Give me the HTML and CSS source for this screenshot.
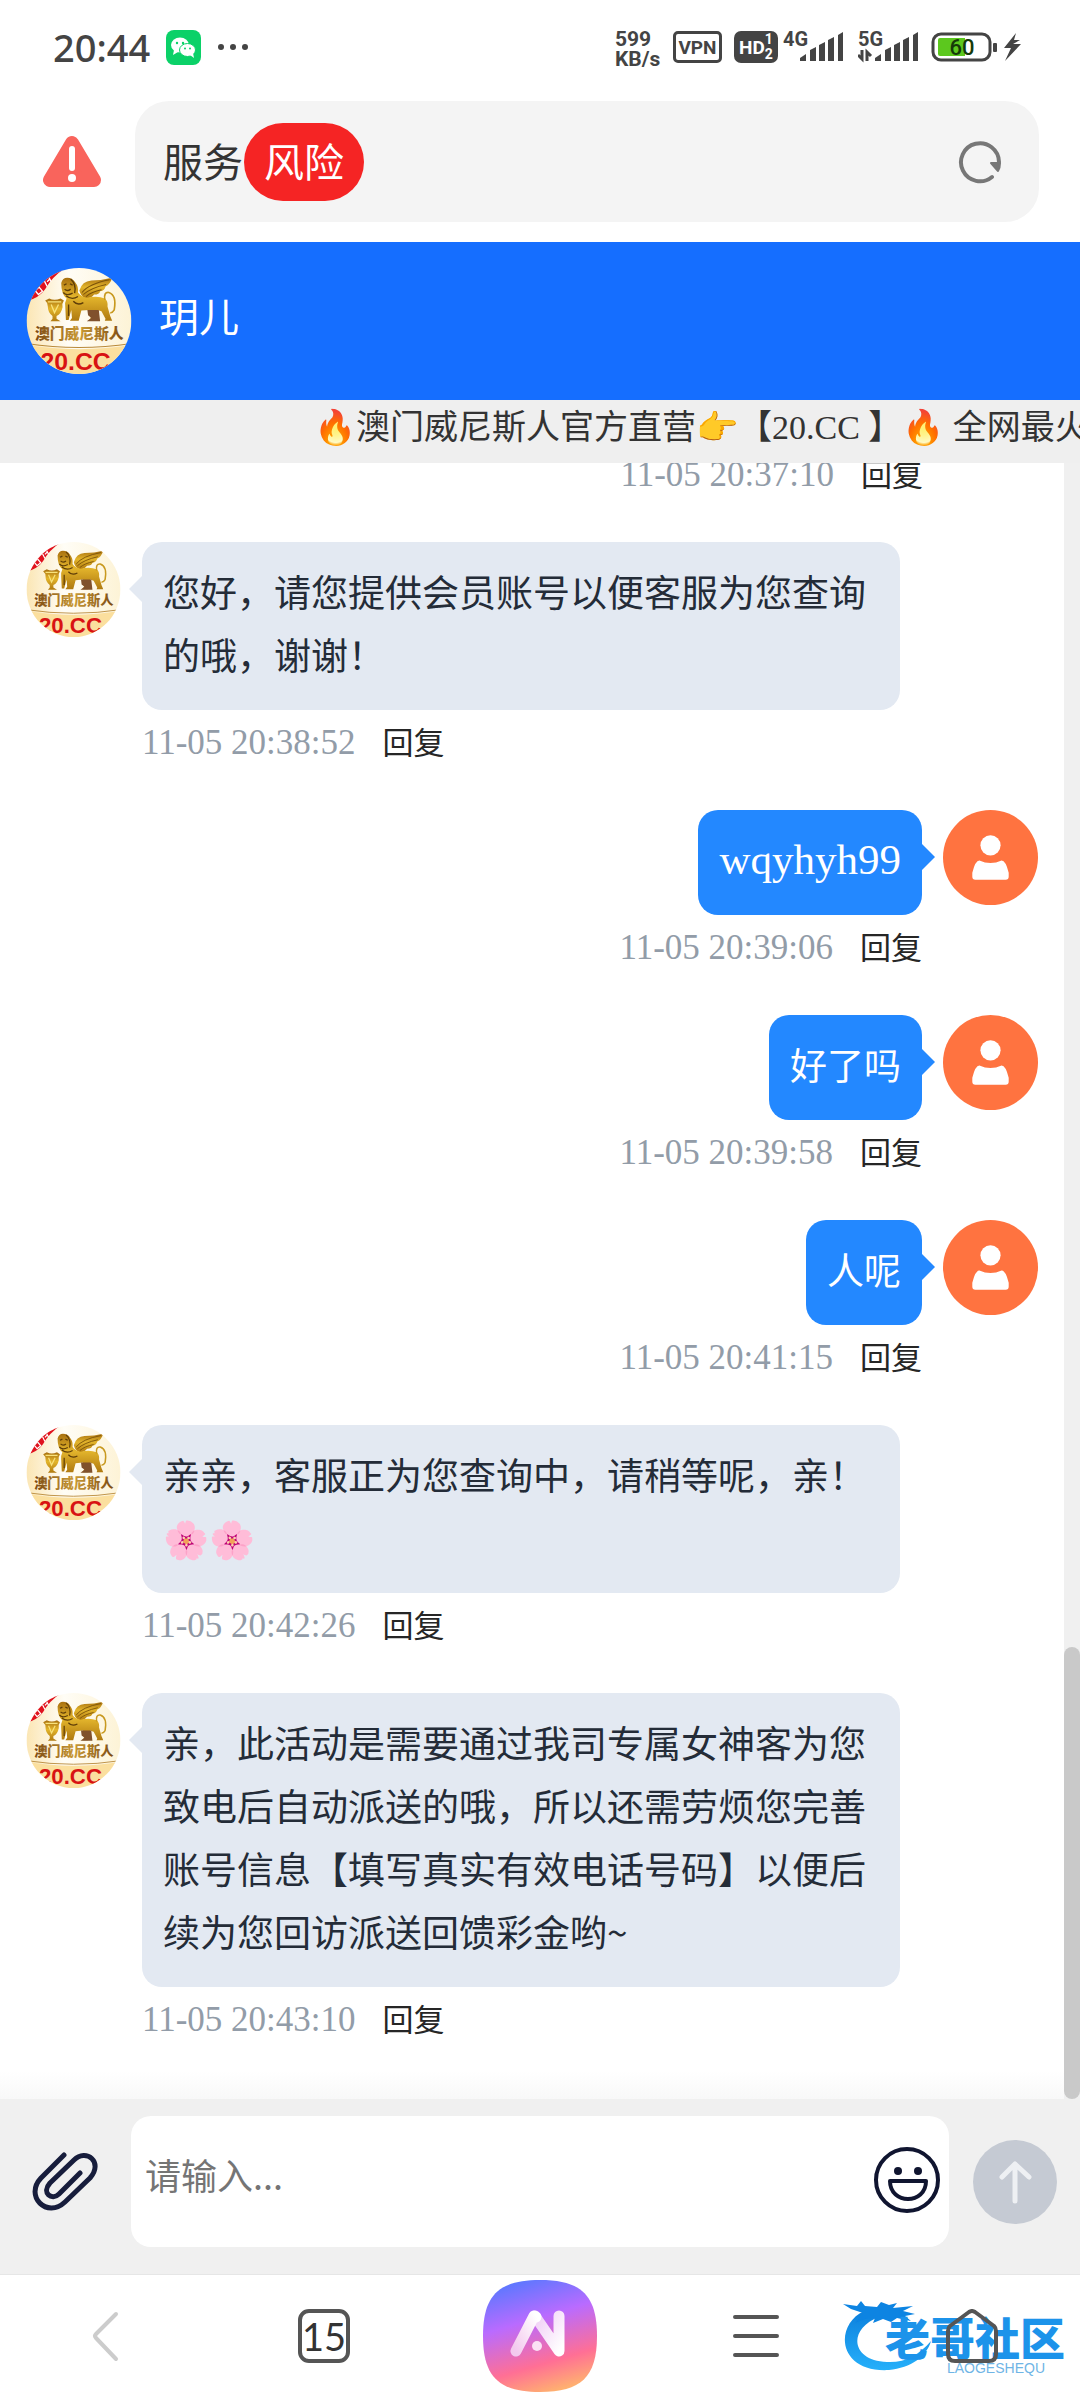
FILE: index.html
```html
<!DOCTYPE html>
<html lang="zh-CN">
<head>
<meta charset="utf-8">
<meta name="viewport" content="width=device-width, initial-scale=1">
<title>服务</title>
<link rel="stylesheet" href="styles.css">
</head>
<body>
<svg class="sprite" aria-hidden="true">
  <defs>
    <linearGradient id="gold" x1="0" y1="0" x2="0" y2="1">
      <stop offset="0" stop-color="#a8700f"/><stop offset=".45" stop-color="#e3b52c"/><stop offset="1" stop-color="#b07a10"/>
    </linearGradient>
    <linearGradient id="cream" x1="0" y1="0" x2="1" y2="0">
      <stop offset="0" stop-color="#fbe6b4"/><stop offset=".4" stop-color="#fffdf6"/><stop offset="1" stop-color="#fdf3d6"/>
    </linearGradient>
    <linearGradient id="letters" x1="0" y1="0" x2="1" y2="0">
      <stop offset="0" stop-color="#7c4a12"/><stop offset=".5" stop-color="#c99a35"/><stop offset="1" stop-color="#7c4a12"/>
    </linearGradient>
    <clipPath id="round"><ellipse cx="177" cy="183" rx="156" ry="158"/></clipPath>
    <symbol id="lion" viewBox="20 25 314 316">
      <g clip-path="url(#round)">
        <rect x="20" y="25" width="314" height="316" fill="url(#cream)"/>
        <path d="M20 254Q177 280 334 254V341H20Z" fill="#fbdf9e"/>
        <path d="M20 250Q177 274 334 250" fill="none" stroke="#b98a3a" stroke-width="3"/>
        <path d="M20 25H136Q96 52 76 88Q58 114 20 124Z" fill="#e0121e"/>
        <path d="M46 92l10 12 12-10-10-12zM74 64l8 16M82 66l8-8M88 54l6 12" fill="none" stroke="#fff" stroke-width="4"/>
        <path d="M178 92Q186 64 214 62Q246 62 276 54Q270 74 256 80Q254 92 240 94Q238 104 222 104Q214 116 196 116Q182 108 178 92Z" fill="url(#gold)"/>
        <path d="M186 98Q206 72 268 60M190 104Q212 84 258 74M198 110Q214 96 244 90" fill="none" stroke="#7b5209" stroke-width="3"/>
        <path d="M124 70Q128 54 142 54Q158 54 166 68Q176 80 174 98Q182 110 200 114Q232 106 254 116Q264 124 262 140L270 168L276 182H254L256 176L244 154L232 150L226 182H206L212 174L208 150L184 152L176 182H150L156 174L154 150L146 180H138L136 140Q134 128 140 116Q124 104 124 70Z" fill="url(#gold)"/>
        <path d="M202 150h34l4 34h-40l14-10-10-8z" fill="#80512c"/>
        <path d="M254 120Q250 96 266 98Q290 106 282 150Q276 160 270 158" fill="none" stroke="#c8991f" stroke-width="5"/>
        <path d="M132 76l8-4M150 72l8 4M134 88q8 8 18 0M130 98q10 12 28 2M152 58q18 16 12 42M138 108q18 14 36 2M160 124q12 14 30 4M146 134v34" fill="none" stroke="#5e3d08" stroke-width="4"/>
        <path d="M76 122L88 116Q104 124 122 116L132 122Q126 130 128 142Q124 162 110 168V176L122 184H92L98 176V168Q84 158 84 140Q84 128 76 122Z" fill="url(#gold)"/>
        <path d="M94 134l10 24 12-24M84 126h40" fill="none" stroke="#f8e27c" stroke-width="4"/>
        <text class="logo-name" x="178" y="236" text-anchor="middle" fill="url(#letters)">澳门威尼斯人</text>
        <text class="logo-site" x="62" y="328">20.CC</text>
      </g>
    </symbol>
    <symbol id="person" viewBox="0 0 94 94">
      <circle cx="47" cy="47" r="47" fill="#ff7340"/>
      <circle cx="47" cy="35" r="10" fill="#fff"/>
      <path d="M36 50Q47 55 58 50Q62 50 65 62V66Q65 69 62 69H32Q29 69 29 66V62Q32 50 36 50Z" fill="#fff"/>
    </symbol>
  </defs>
</svg>

<div class="phone">
  <header class="status">
    <div class="status-side">
      <time class="clock">20:44</time>
      <svg class="wechat" viewBox="0 0 35 35" aria-label="微信">
        <rect width="35" height="35" rx="8" fill="#0bd168"/>
        <ellipse cx="14" cy="15" rx="9" ry="7.500" fill="#fff"/><path d="M8 20l-1 5 5-3z" fill="#fff"/>
        <ellipse cx="21.500" cy="20" rx="8" ry="6.500" fill="#fff" stroke="#0bd168" stroke-width="1"/><path d="M24 25l4 3-1-5z" fill="#fff"/>
        <g fill="#0bd168"><circle cx="11" cy="13" r="1.200"/><circle cx="17" cy="13" r="1.200"/><circle cx="19" cy="18.500" r="1"/><circle cx="24" cy="18.500" r="1"/></g>
      </svg>
      <svg class="more" viewBox="0 0 30 8" fill="#444"><circle cx="3" cy="4" r="3"/><circle cx="15" cy="4" r="3"/><circle cx="27" cy="4" r="3"/></svg>
    </div>
    <div class="status-side status-right">
      <div class="speed"><span>599</span><span>KB/s</span></div>
      <span class="vpn">VPN</span>
      <span class="hd"><span>HD</span><span class="sims"><span>1</span><span>2</span></span></span>
      <div class="signal" aria-label="4G">
        <span class="net">4G</span>
        <svg viewBox="0 0 62 34" fill="#444">
          <path d="M17 31v-3l6-4v7zM27 31V20l6-3v14zM36 31V15l6-3v19zM45 31V10l6-3v24zM55 31V5l5-3v29z"/>
        </svg>
      </div>
      <div class="signal signal-5g" aria-label="5G">
        <span class="net">5G</span>
        <svg viewBox="0 0 62 34" fill="#444">
          <path d="M17 31v-3l6-4v7zM27 31V20l6-3v14zM36 31V15l6-3v19zM45 31V10l6-3v24zM55 31V5l5-3v29z"/>
          <path d="M4 20v9l-4-4M9 31v-9l4 4" fill="none" stroke="#444" stroke-width="3"/>
        </svg>
      </div>
      <svg class="battery" viewBox="0 0 92 30" aria-label="60%">
        <rect x="2" y="2" width="57" height="26" rx="8" fill="#fff" stroke="#444" stroke-width="3"/>
        <path d="M9 6h25v18H9q-2 0-2-2V8q0-2 2-2z" fill="#5cc81e"/>
        <text class="charge" x="31" y="23" text-anchor="middle">60</text>
        <rect x="62" y="11" width="4" height="9" rx="1" fill="#444"/>
        <path d="M85 1L73 16h7l-6 13 16-17h-8l7-4h-6z" fill="#444"/>
      </svg>
    </div>
  </header>

  <div class="browser-bar">
    <svg class="warning" viewBox="0 0 60 54" aria-label="警告">
      <path d="M30 8L8 45H52Z" fill="#f9645c" stroke="#f9645c" stroke-width="14" stroke-linejoin="round"/>
      <path d="M30 14V33" stroke="#fff" stroke-width="6" stroke-linecap="round"/><circle cx="30" cy="43" r="4" fill="#fff"/>
    </svg>
    <div class="address">
      <span class="page-name">服务</span><span class="risk">风险</span>
      <button class="icon-button refresh" aria-label="刷新">
        <svg viewBox="0 0 44 44" fill="none"><path d="M34 37A19 19 0 1 1 41 22" stroke="#777" stroke-width="4" stroke-linecap="round"/><path d="M33 23h9q0 5-2 8z" fill="#777" stroke="#777" stroke-width="2" stroke-linejoin="round"/></svg>
      </button>
    </div>
  </div>

  <div class="agent">
    <svg class="agent-avatar"><use href="#lion"/></svg>
    <h1>玥儿</h1>
  </div>
  <div class="notice"><p>🔥澳门威尼斯人官方直营👉【20.CC 】🔥 全网最火</p></div>

  <main class="chat">
    <div class="messages">
      <article class="message sent">
        <div class="content"><div class="meta"><time>11-05 20:37:10</time><button>回复</button></div></div>
      </article>
      <article class="message">
        <svg class="avatar"><use href="#lion"/></svg>
        <div class="content">
          <p class="bubble">您好，请您提供会员账号以便客服为您查询的哦，谢谢！</p>
          <div class="meta"><time>11-05 20:38:52</time><button>回复</button></div>
        </div>
      </article>
      <article class="message sent">
        <svg class="avatar"><use href="#person"/></svg>
        <div class="content">
          <p class="bubble latin">wqyhyh99</p>
          <div class="meta"><time>11-05 20:39:06</time><button>回复</button></div>
        </div>
      </article>
      <article class="message sent">
        <svg class="avatar"><use href="#person"/></svg>
        <div class="content">
          <p class="bubble">好了吗</p>
          <div class="meta"><time>11-05 20:39:58</time><button>回复</button></div>
        </div>
      </article>
      <article class="message sent">
        <svg class="avatar"><use href="#person"/></svg>
        <div class="content">
          <p class="bubble">人呢</p>
          <div class="meta"><time>11-05 20:41:15</time><button>回复</button></div>
        </div>
      </article>
      <article class="message">
        <svg class="avatar"><use href="#lion"/></svg>
        <div class="content">
          <p class="bubble">亲亲，客服正为您查询中，请稍等呢，亲！<br>🌸🌸</p>
          <div class="meta"><time>11-05 20:42:26</time><button>回复</button></div>
        </div>
      </article>
      <article class="message">
        <svg class="avatar"><use href="#lion"/></svg>
        <div class="content">
          <p class="bubble">亲，此活动是需要通过我司专属女神客为您致电后自动派送的哦，所以还需劳烦您完善账号信息【填写真实有效电话号码】以便后续为您回访派送回馈彩金哟~</p>
          <div class="meta"><time>11-05 20:43:10</time><button>回复</button></div>
        </div>
      </article>
    </div>
    <div class="track"><div class="thumb"></div></div>
  </main>

  <form class="composer">
    <button type="button" class="icon-button clip" aria-label="附件">
      <svg viewBox="0 0 66 60" fill="none" stroke="#171d3c" stroke-width="5" stroke-linecap="round" stroke-linejoin="round"><path d="M32 3L9 26C-8 44 15 67 33 50L58 26C72 10 54-4 42 8L18 31C9 41 20 49 27 42L48 21"/></svg>
    </button>
    <div class="field">
      <input type="text" aria-label="消息" placeholder="请输入...">
      <button type="button" class="icon-button smile" aria-label="表情">
        <svg viewBox="0 0 68 68" fill="none" stroke="#101530" stroke-width="4"><circle cx="34" cy="34" r="31"/><path d="M17 35H53C53 59 17 59 17 35Z" stroke-linejoin="round"/><g fill="#101530" stroke="none"><circle cx="25" cy="25" r="4"/><circle cx="45" cy="25" r="4"/></g></svg>
      </button>
    </div>
    <button type="button" class="send" aria-label="发送">
      <svg viewBox="0 0 84 84" fill="none" stroke="#eef0f3" stroke-width="5" stroke-linecap="round" stroke-linejoin="round"><path d="M42 61V24M29 37L42 24L56 37"/></svg>
    </button>
  </form>

  <nav class="toolbar">
    <button class="icon-button" aria-label="后退"><svg class="glyph" viewBox="0 0 54 54" fill="none"><path d="M35 5L15 25Q13 27 15 29L35 50" stroke="#ccc" stroke-width="4" stroke-linecap="round"/></svg></button>
    <button class="tabs">15</button>
    <button class="icon-button" aria-label="AI">
      <svg class="ai" viewBox="0 0 114 112">
        <defs>
          <linearGradient id="dusk" x1=".3" y1="0" x2=".6" y2="1"><stop offset="0" stop-color="#5a78ff"/><stop offset=".36" stop-color="#b96bff"/><stop offset=".75" stop-color="#ff6f95"/><stop offset="1" stop-color="#ffb070"/></linearGradient>
          <linearGradient id="fade-a" x1="1" y1="0" x2="0" y2="1"><stop offset="0" stop-color="#fff"/><stop offset="1" stop-color="#f3c9ee"/></linearGradient>
          <linearGradient id="fade-n" x1="0" y1="0" x2="1" y2="1"><stop offset="0" stop-color="#f0cdf6"/><stop offset="1" stop-color="#fff"/></linearGradient>
        </defs>
        <path d="M57 0C98 0 114 15 114 56S98 112 57 112 0 97 0 56 16 0 57 0Z" fill="url(#dusk)"/>
        <g fill="none" stroke-width="11" stroke-linecap="round" stroke-linejoin="round">
          <path d="M52 36L76 71V36" stroke="url(#fade-n)"/>
          <path d="M33 71L51 36L53 37" stroke="url(#fade-a)"/>
        </g>
        <circle cx="54" cy="66" r="5" fill="#fbe0f4"/>
      </svg>
    </button>
    <button class="icon-button" aria-label="菜单"><svg class="glyph" viewBox="0 0 54 54" fill="none" stroke="#555" stroke-width="4" stroke-linecap="round"><path d="M6 8H48M6 27H48M6 46H48"/></svg></button>
    <div class="home-cell">
      <div class="brand">
        <svg viewBox="0 0 90 76" aria-hidden="true">
          <defs><linearGradient id="sea" x1="0" y1="0" x2="0" y2="1"><stop offset="0" stop-color="#0d80dd"/><stop offset="1" stop-color="#26b0fa"/></linearGradient></defs>
          <path d="M21 12C-9 26-6 74 46 71C68 69 84 57 88 42C76 56 62 64 44 63C8 62 4 30 36 18Z" fill="url(#sea)"/>
          <path d="M0 5L14 7L18 2L22 7L34 8L38 3L46 6L54 4L50 9L70 7L60 12L72 15L62 17L68 22L54 19L48 23L40 20L30 24L32 19L22 20L12 24L20 14L8 10Z" fill="#0d84e2"/>
        </svg>
        <span class="brand-name">老哥社区</span>
        <span class="brand-sub">LAOGESHEQU</span>
      </div>
      <button class="icon-button home" aria-label="主页"><svg class="glyph" viewBox="0 0 54 54" fill="none" stroke="#555" stroke-width="4" stroke-linejoin="round"><path d="M24 3Q27 1 30 3L49 17Q51 19 51 22V45Q51 52 44 52H10Q3 52 3 45V22Q3 19 5 17Z"/></svg></button>
    </div>
  </nav>
</div>
</body>
</html>
```
FILE: styles.css
```css
* { box-sizing: border-box; }
body { margin: 0; font-family: "Noto Sans CJK SC", sans-serif; color: #333; background: #fff; }
p, h1 { margin: 0; font-weight: 400; }
button { padding: 0; border: 0; background: none; font: inherit; color: inherit; }
svg { display: block; flex: none; }
.sprite { position: absolute; width: 0; height: 0; }
.phone { display: flex; flex-direction: column; height: 100vh; overflow: hidden; }

.status { display: flex; justify-content: space-between; height: 94px; padding: 0 57px 0 53px; font-family: "Noto Sans", sans-serif; color: #444; }
.status-side { display: flex; align-items: center; }
.clock { font-size: 38px; font-weight: 500; }
.wechat { width: 35px; height: 35px; margin-left: 16px; }
.more { width: 30px; height: 8px; margin-left: 17px; }
.status-right { font-family: Roboto, sans-serif; font-weight: 700; }
.speed { display: flex; flex-direction: column; width: 58px; margin-top: 4px; font-size: 21px; line-height: 20px; }
.vpn { display: grid; place-items: center; width: 49px; height: 32px; border: 3px solid #444; border-radius: 5px; font-size: 19px; }
.hd { display: flex; align-items: center; justify-content: center; width: 44px; height: 32px; margin: 0 5px 0 12px; border-radius: 7px; background: #444; color: #fff; font-size: 19px; }
.sims { display: flex; flex-direction: column; font-size: 14px; line-height: 15px; }
.signal { position: relative; width: 62px; }
.signal svg { width: 62px; height: 34px; }
.signal-5g { margin: 0 11px 0 13px; }
.net { position: absolute; top: -2px; left: 0; font-size: 20px; line-height: 22px; }
.battery { width: 92px; height: 30px; }
.charge { font: 500 22px Roboto, sans-serif; fill: #153a08; }

.browser-bar { display: flex; align-items: center; gap: 33px; height: 148px; padding: 0 41px 13px 42px; }
.warning { width: 60px; height: 54px; }
.address { display: flex; flex: 1; align-items: center; height: 121px; padding: 0 37px 0 28px; border-radius: 34px; background: #f4f4f4; font-size: 40px; }
.page-name { padding-bottom: 4px; line-height: 74px; }
.risk { margin-left: 1px; padding: 0 20px 4px; border-radius: 39px; background: #f52424; color: #fff; line-height: 74px; }
.icon-button { display: grid; place-items: center; }
.refresh { margin-left: auto; }
.refresh svg { width: 44px; height: 44px; }

.agent { display: flex; gap: 27px; height: 158px; padding: 26px; background: #156eff; color: #fff; }
.agent-avatar { width: 106px; height: 106px; }
.agent h1 { font-size: 40px; line-height: 94px; }
.notice { height: 63px; padding-left: 314px; overflow: hidden; background: #efefef; font-family: "Liberation Serif", "Noto Sans CJK SC", serif; font-size: 34px; line-height: 56px; white-space: nowrap; }

.chat { display: flex; flex: 1; min-height: 0; }
.messages { display: flex; flex: 1; flex-direction: column; justify-content: flex-end; gap: 49px; min-width: 0; padding: 0 26px 61px; overflow: hidden; background: linear-gradient(to top, #f8f8f8, #fff 28px); }
.message { display: flex; flex: none; align-items: flex-start; gap: 21px; }
.sent { flex-direction: row-reverse; }
.sent:first-child { padding-right: 115px; }
.avatar { width: 95px; height: 95px; }
.content { display: flex; flex: 1; flex-direction: column; max-width: 758px; }
.sent .content { align-items: flex-end; }
.bubble { position: relative; padding: 18px 21px 24px; border-radius: 20px; background: #e3e9f2; color: #242c38; font-size: 37px; line-height: 63px; }
.bubble::before { content: ""; position: absolute; top: 34px; right: 100%; border: 13px solid transparent; border-left: 0; border-right-color: #e3e9f2; }
.sent .bubble { background: #2388ff; color: #fff; }
.sent .bubble::before { right: auto; left: 100%; border-right: 0; border-left: 13px solid #2388ff; }
.sent .latin { font-family: "Liberation Serif", serif; font-size: 43px; }
.meta { display: flex; gap: 27px; margin-top: 15px; line-height: 36px; }
.meta time { color: #929ca8; font-family: "Liberation Serif", serif; font-size: 35px; }
.meta button { padding-bottom: 4px; font-size: 31px; line-height: 32px; color: #262626; }
.track { display: flex; flex-direction: column; justify-content: flex-end; width: 16px; background: #f0f0f0; }
.thumb { height: 452px; border-radius: 8px; background: #c9c9c9; }

.composer { display: flex; align-items: center; height: 176px; padding: 0 23px 10px 32px; border-bottom: 1px solid #e6e6e6; background: #f0f0f0; }
.clip svg { width: 66px; height: 60px; }
.field { display: flex; flex: 1; align-items: center; height: 131px; margin: 0 24px 0 33px; padding: 0 8px 0 14px; border-radius: 20px; background: #fff; }
.field input { flex: 1; min-width: 0; height: 108px; padding: 0 0 16px; border: 0; outline: 0; background: none; font: 36px "Noto Sans CJK SC", sans-serif; }
.field input::placeholder { color: #757575; }
.smile svg { width: 68px; height: 68px; }
.smile { padding-bottom: 4px; }
.send { width: 84px; height: 84px; border-radius: 50%; background: #c5cad3; }

.toolbar { display: grid; grid-template-columns: repeat(5, 1fr); align-items: center; justify-items: center; height: 125px; padding-bottom: 4px; }
.glyph { width: 54px; height: 54px; }
.tabs { width: 52px; height: 54px; border: 4px solid #555; border-radius: 11px; font: 38px/42px Lato, sans-serif; }
.ai { width: 114px; height: 112px; }
.home-cell { position: relative; }
.home { position: relative; }
.brand { position: absolute; top: -10px; right: -66px; width: 222px; height: 76px; }
.brand svg { width: 90px; height: 76px; }
.brand-name { position: absolute; top: 16px; right: 0; color: #1c93ea; font-size: 45px; font-weight: 900; line-height: 44px; white-space: nowrap; }
.brand-sub { position: absolute; top: 62px; right: 20px; color: #6fb5e6; font: 14px/14px "Liberation Sans", sans-serif; }
.logo-name { font: 900 44px "Noto Sans CJK SC", sans-serif; }
.logo-site { font: 700 74px "Liberation Sans", sans-serif; fill: #d81313; }
```
